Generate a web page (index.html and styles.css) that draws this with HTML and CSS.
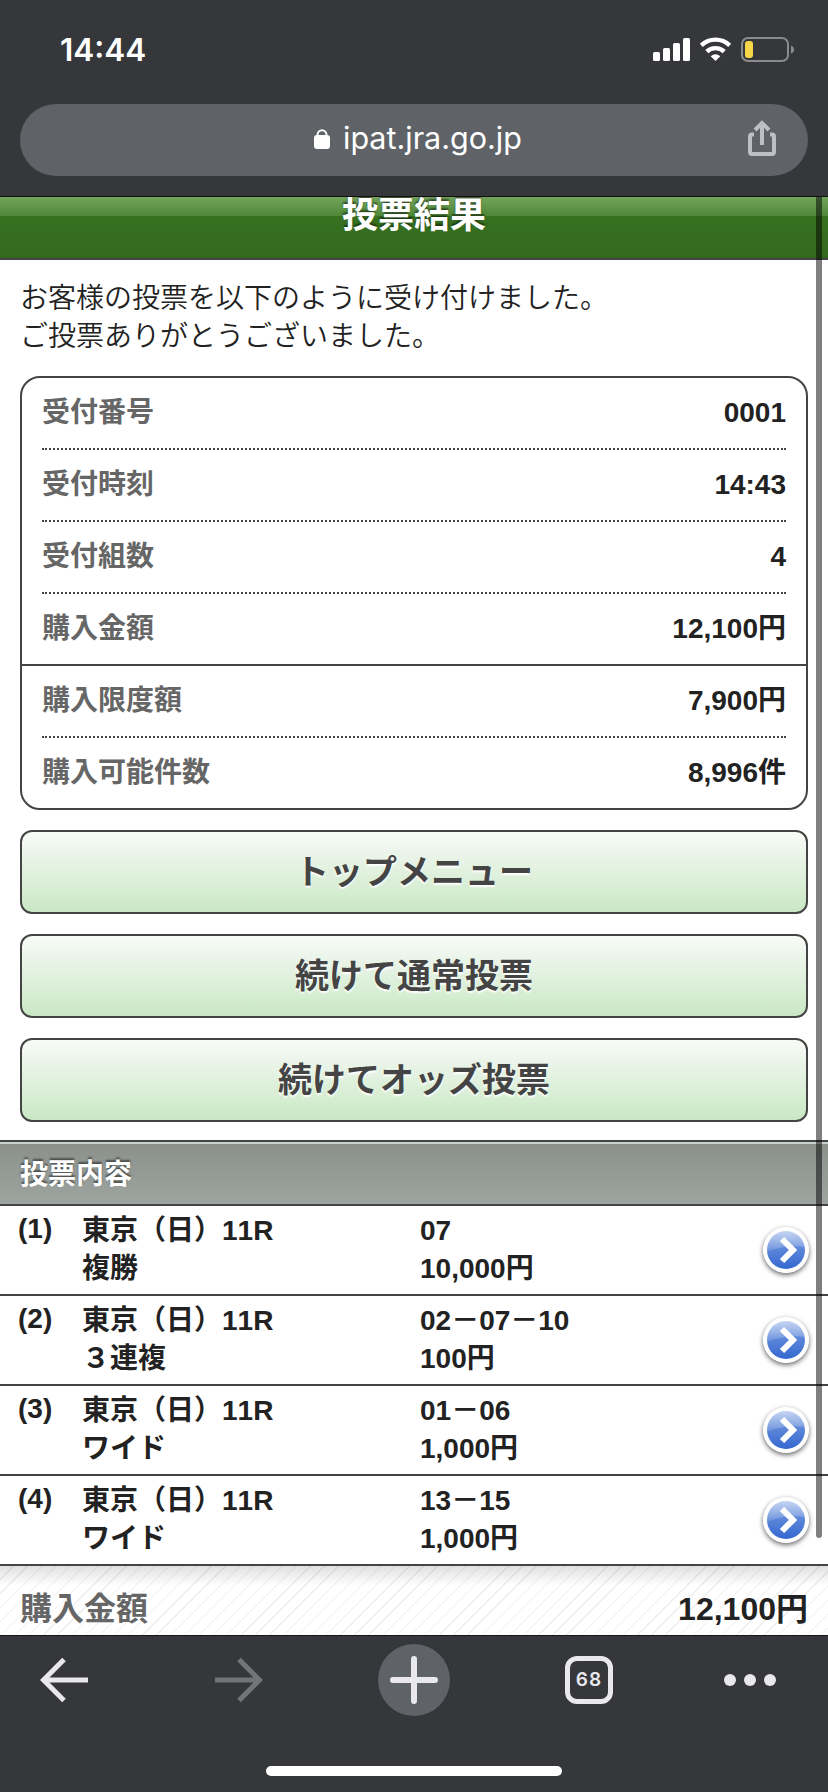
FILE: index.html
```
<!DOCTYPE html>
<html lang="ja">
<head>
    <meta charset="UTF-8">
    <title>投票結果</title>
    <link rel="stylesheet" href="styles.css">
</head>
<body>
    <svg class="defs" width="0" height="0">
        <defs>
            <linearGradient id="blue" x1="0" y1="0" x2="0" y2="1">
                <stop offset="0" stop-color="#7fa2e2"/>
                <stop offset="1" stop-color="#3467cf"/>
            </linearGradient>
            <linearGradient id="gloss" x1="0" y1="0" x2="0" y2="1">
                <stop offset="0" stop-color="#fff" stop-opacity=".55"/>
                <stop offset="1" stop-color="#fff" stop-opacity=".1"/>
            </linearGradient>
            <symbol id="arrow" viewBox="0 0 46 46">
                <circle cx="23" cy="23" r="23" fill="#fff"/>
                <circle cx="23" cy="23" r="19" fill="url(#blue)"/>
                <path d="M4 25a19 19 0 0 1 38-5C30 18 15 20 4 25z" fill="url(#gloss)"/>
                <path d="M19 12l11 11-11 11" fill="none" stroke="#fff" stroke-width="6"/>
            </symbol>
        </defs>
    </svg>

    <div class="phone">
        <div class="status">
            <span class="time">14:44</span>
            <svg class="statusIcons" width="142" height="26" viewBox="0 0 142 26">
                <g fill="#fff">
                    <rect x="0" y="15" width="7" height="9" rx="1.5"/>
                    <rect x="10" y="11" width="7" height="13" rx="1.5"/>
                    <rect x="20" y="6" width="7" height="18" rx="1.5"/>
                    <rect x="30" y="1" width="7" height="23" rx="1.5"/>
                    <path d="M62.500 24l-4.800-4.700q4.800-4 9.600 0z"/>
                </g>
                <g fill="none" stroke="#fff" stroke-width="4.300">
                    <path d="M48.300 8.400a20.500 20.500 0 0 1 28.400 0"/>
                    <path d="M53.800 14.600a12.500 12.500 0 0 1 17.400 0"/>
                </g>
                <rect x="89" y="1" width="46" height="23" rx="6" fill="none" stroke="#8a8b8d" stroke-width="2"/>
                <rect x="92" y="4" width="8" height="17" rx="3" fill="#f8d64a"/>
                <path d="M138 8.500q3 1 3 4t-3 4z" fill="#8a8b8d"/>
            </svg>
        </div>
        <div class="urlWrap">
            <div class="urlBar">
                <svg class="lock" width="16" height="20" viewBox="0 0 16 20">
                    <rect x="0" y="6" width="16" height="14" rx="3" fill="#fff"/>
                    <path d="M3.500 8V6a4.500 4.700 0 0 1 9 0v2" fill="none" stroke="#fff" stroke-width="2"/>
                </svg>
                <span class="url">ipat.jra.go.jp</span>
                <svg class="share" width="28" height="36" viewBox="0 0 28 36" fill="none" stroke="#bcbfc4" stroke-width="4">
                    <path d="M6 14.500H4a2 2 0 0 0-2 2V32a2 2 0 0 0 2 2h20a2 2 0 0 0 2-2V16.500a2 2 0 0 0-2-2h-2"/>
                    <path d="M14 25V3M7 10l7-7 7 7"/>
                </svg>
            </div>
        </div>

        <div class="page">
            <h1 class="title">投票結果</h1>
            <div class="content">
                <p class="message">お客様の投票を以下のように受け付けました。<br>ご投票ありがとうございました。</p>
                <dl class="result">
                    <div><dt>受付番号</dt><dd>0001</dd></div>
                    <div><dt>受付時刻</dt><dd>14:43</dd></div>
                    <div><dt>受付組数</dt><dd>4</dd></div>
                    <div class="last"><dt>購入金額</dt><dd>12,100円</dd></div>
                    <div><dt>購入限度額</dt><dd>7,900円</dd></div>
                    <div class="last"><dt>購入可能件数</dt><dd>8,996件</dd></div>
                </dl>
                <a class="btn">トップメニュー</a>
                <a class="btn">続けて通常投票</a>
                <a class="btn">続けてオッズ投票</a>
            </div>

            <h2 class="heading">投票内容</h2>
            <ul class="bets">
                <li>
                    <span class="no">(1)</span>
                    <span class="race">東京（日）11R<br>複勝</span>
                    <span class="pick">07<br>10,000円</span>
                    <svg class="more"><use href="#arrow"/></svg>
                </li>
                <li>
                    <span class="no">(2)</span>
                    <span class="race">東京（日）11R<br>３連複</span>
                    <span class="pick">02－07－10<br>100円</span>
                    <svg class="more"><use href="#arrow"/></svg>
                </li>
                <li>
                    <span class="no">(3)</span>
                    <span class="race">東京（日）11R<br>ワイド</span>
                    <span class="pick">01－06<br>1,000円</span>
                    <svg class="more"><use href="#arrow"/></svg>
                </li>
                <li>
                    <span class="no">(4)</span>
                    <span class="race">東京（日）11R<br>ワイド</span>
                    <span class="pick">13－15<br>1,000円</span>
                    <svg class="more"><use href="#arrow"/></svg>
                </li>
            </ul>
            <div class="total"><span class="label">購入金額</span><span>12,100円</span></div>
            <div class="scrollbar"></div>
        </div>

        <div class="toolbar">
            <div class="tools">
                <svg width="48" height="48" viewBox="0 0 48 48" fill="none" stroke="#e8e8ed" stroke-width="5">
                    <path d="M48 24H4M24 3.500L3.500 24 24 44.500"/>
                </svg>
                <svg width="48" height="48" viewBox="0 0 48 48" fill="none" stroke="#737476" stroke-width="5">
                    <path d="M0 24h44M24 3.500L44.500 24 24 44.500"/>
                </svg>
                <svg class="plus" width="72" height="72" viewBox="0 0 72 72">
                    <circle cx="36" cy="36" r="36" fill="#5f6368"/>
                    <path d="M36 15v42M15 36h42" stroke="#e8e8ed" stroke-width="6" stroke-linecap="round"/>
                </svg>
                <span class="tabs">68</span>
                <svg class="dots" width="52" height="12" viewBox="0 0 52 12" fill="#e8e8ed">
                    <circle cx="6" cy="6" r="6"/>
                    <circle cx="26" cy="6" r="6"/>
                    <circle cx="46" cy="6" r="6"/>
                </svg>
            </div>
            <div class="home"></div>
        </div>
    </div>
</body>
</html>
```
FILE: styles.css
```
*{
    padding: 0;
    margin: 0;
    box-sizing: border-box;
}

body{
    font-family: "Liberation Sans", "Noto Sans CJK JP", sans-serif;
    font-size: 28px;
    line-height: 38px;
    font-kerning: none;
    color: #222;
}

.defs{
    position: absolute;
}

.phone{
    width: 828px;
    height: 1792px;
    overflow: hidden;
    display: flex;
    flex-direction: column;
    background-color: #36373b;
}

/* ステータスバー */
.status{
    height: 104px;
    padding: 0 33px 4px 60px;
    display: flex;
    align-items: center;
    justify-content: space-between;
}

.time{
    font: 600 31.500px/40px Inter, sans-serif;
    color: #fff;
}

.urlWrap{
    height: 93px;
    padding: 0 20px;
    border-bottom: 1px solid #111;
}

.urlBar{
    height: 72px;
    border-radius: 36px;
    padding: 0 32px 0 294px;
    background-color: #5f6368;
    display: flex;
    align-items: center;
}

.lock{
    margin-bottom: 2px;
}

.url{
    flex: 1;
    margin-left: 13px;
    padding-bottom: 4px;
    font: 400 30.500px/40px Inter, sans-serif;
    color: #fff;
}

.share{
    margin-bottom: 5px;
}

/* ページ */
.page{
    flex: 1;
    position: relative;
    overflow: hidden;
    background-color: #fff;
}

.title{
    height: 63px;
    border-bottom: 2px solid #444;
    background: linear-gradient(#73a35c, #4d8837 19px, #377120 19px, #33691c);
    font-size: 36px;
    line-height: 38px;
    text-align: center;
    color: #fff;
    text-shadow: 0 -2px 2px rgba(0,0,0,.5);
}

.content{
    padding: 20px 20px 18px;
}

.message{
    font-weight: 350;
    margin-bottom: 20px;
}

.result{
    border: 2px solid #444;
    border-radius: 20px;
    font-weight: bold;
}

.result div{
    height: 72px;
    margin: 0 20px;
    padding-top: 16px;
    display: flex;
    justify-content: space-between;
    border-bottom: 2px dotted #444;
}

.result .last{
    margin: 0;
    padding-left: 20px;
    padding-right: 20px;
    border-bottom: 2px solid #444;
}

.result .last:last-child{
    height: 70px;
    border-bottom: 0;
}

.result dt{
    color: #666;
}

.btn{
    display: block;
    height: 84px;
    margin-top: 20px;
    border: 2px solid #444;
    border-radius: 12px;
    background: linear-gradient(#f9fbf6, #ecf5eb 25%, #d5edd1 75%, #c9e6c4);
    font-size: 34px;
    font-weight: bold;
    line-height: 80px;
    text-align: center;
    color: #444;
    text-shadow: 0 2px 2px #fff;
}

.heading{
    height: 66px;
    padding: 14px 20px 0;
    border-top: 2px solid #444;
    border-bottom: 2px solid #444;
    background: linear-gradient(#c9d1cc 2px, #8b8f8a 2px, #929995 40%, #9ea4a0);
    font-size: 28px;
    color: #fff;
    text-shadow: 0 -2px 2px rgba(0,0,0,.5);
}

.bets{
    list-style: none;
    font-weight: bold;
}

.bets li{
    height: 90px;
    padding: 6px 19px 0 18px;
    display: flex;
    border-bottom: 2px solid #444;
}

.no{
    width: 64px;
    margin-top: -2px;
}

.race{
    width: 338px;
}

.pick{
    flex: 1;
}

.more{
    width: 46px;
    height: 46px;
    margin-top: 15px;
    border-radius: 50%;
    box-shadow: 0 2px 5px rgba(0,0,0,.6);
}

.total{
    height: 90px;
    padding: 24px 20px;
    display: flex;
    justify-content: space-between;
    font-size: 32px;
    font-weight: bold;
    background: linear-gradient(rgba(0,0,0,.12), transparent 20px), repeating-linear-gradient(135deg, #fff 0, #fff 9px, #eee 9px, #eee 10px);
}

.label{
    color: #666;
}

.scrollbar{
    position: absolute;
    top: 0;
    right: 6px;
    width: 6px;
    height: 1341px;
    border-radius: 0 0 3px 3px;
    background-color: rgba(0,0,0,.5);
}

/* 下のツールバー */
.toolbar{
    height: 157px;
    border-top: 1px solid #15181a;
    background-color: #36373b;
}

.tools{
    height: 88px;
    padding-left: 40px;
    display: flex;
    align-items: center;
    gap: 127px;
}

.plus{
    margin: 0 -12px;
}

.tabs{
    width: 48px;
    height: 48px;
    border: 5px solid #e8e8ed;
    border-radius: 12px;
    font: 600 19px/38px Inter, sans-serif;
    letter-spacing: 1px;
    text-align: center;
    color: #e8e8ed;
}

.dots{
    margin-left: -16px;
}

.home{
    width: 296px;
    height: 10px;
    margin: 42px auto 0;
    border-radius: 5px;
    background-color: #fff;
}
```
